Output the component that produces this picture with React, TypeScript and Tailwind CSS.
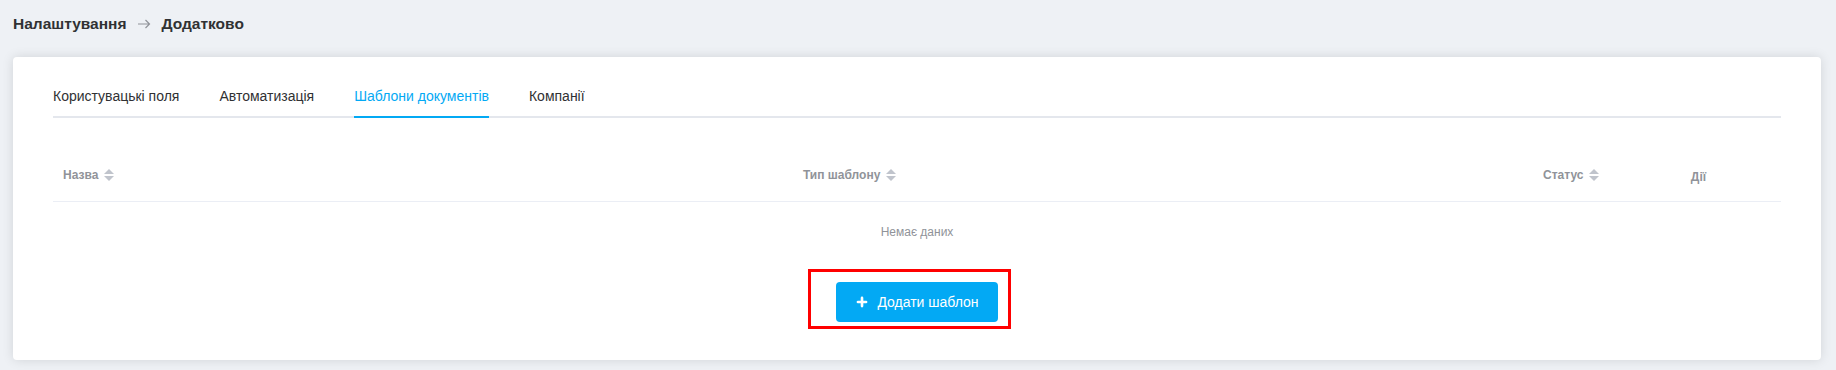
import { Plus } from 'lucide-react';

const tabs = ['Користувацькі поля', 'Автоматизація', 'Шаблони документів', 'Компанії'];
const activeTab = 'Шаблони документів';

function SortIcon() {
  return (
    <svg width="10" height="14" viewBox="0 0 10 14" className="ml-[6px] shrink-0">
      <path d="M0 6 L5 1 L10 6 Z" fill="#c0c4cc" />
      <path d="M0 8 L10 8 L5 13 Z" fill="#c0c4cc" />
    </svg>
  );
}

function HeaderCell({ label, sortable = true }: { label: string; sortable?: boolean }) {
  return (
    <div className="flex items-center px-[10px] text-[12px] font-bold text-[#909399]">
      <span>{label}</span>
      {sortable && <SortIcon />}
    </div>
  );
}

export default function App() {
  return (
    <div className="min-h-[370px] bg-[#eef1f5] pl-[13px] pr-[15px] pt-[13px] font-['Liberation_Sans',Arial,sans-serif]">
      <div className="flex h-[22px] items-center text-[15.5px] font-bold text-[#303133]">
        <span>Налаштування</span>
        <svg width="13" height="10" viewBox="0 0 13 10" className="mx-[11px]">
          <path d="M0 5 H11.5 M7.5 1 L11.5 5 L7.5 9" fill="none" stroke="#909399" strokeWidth="1.2" />
        </svg>
        <span>Додатково</span>
      </div>

      <div className="mt-[22px] rounded-[4px] bg-white px-[40px] pt-[19px] pb-[38px] shadow-[0_0_12px_rgba(0,0,0,0.12)]">
        <div className="flex border-b-2 border-[#e4e7ed]">
          {tabs.map((tab, i) => (
            <div
              key={tab}
              className={`relative flex h-[40px] items-center text-[14px] ${i === 0 ? 'pr-[20px]' : 'px-[20px]'} ${
                tab === activeTab ? 'text-[#03a9f4]' : 'text-[#303133]'
              }`}
            >
              {tab}
              {tab === activeTab && (
                <div className="absolute -bottom-[2px] left-[20px] right-[20px] h-[2px] bg-[#03a9f4]" />
              )}
            </div>
          ))}
        </div>

        <div className="mt-[31px]">
          <div className="grid h-[53px] grid-cols-[740px_740px_83px_1fr] items-center border-b border-[#ebeef5]">
            <HeaderCell label="Назва" />
            <HeaderCell label="Тип шаблону" />
            <HeaderCell label="Статус" />
            <div className="mt-[4px] text-center text-[12px] font-bold text-[#909399]">Дії</div>
          </div>
          <div className="flex h-[60px] items-center justify-center text-[12px] text-[#909399]">
            Немає даних
          </div>
        </div>

        <div className="mt-[20px] flex justify-center">
          <div className="relative">
            <div className="pointer-events-none absolute -top-[13px] -bottom-[7px] -left-[28px] -right-[13px] border-[3px] border-[#ff0000]" />
            <button className="flex h-[40px] w-[162px] items-center justify-center gap-[8px] rounded-[4px] bg-[#03a9f4] text-[14px] text-white">
              <Plus size={14} strokeWidth={4.5} />
              Додати шаблон
            </button>
          </div>
        </div>
      </div>
    </div>
  );
}
